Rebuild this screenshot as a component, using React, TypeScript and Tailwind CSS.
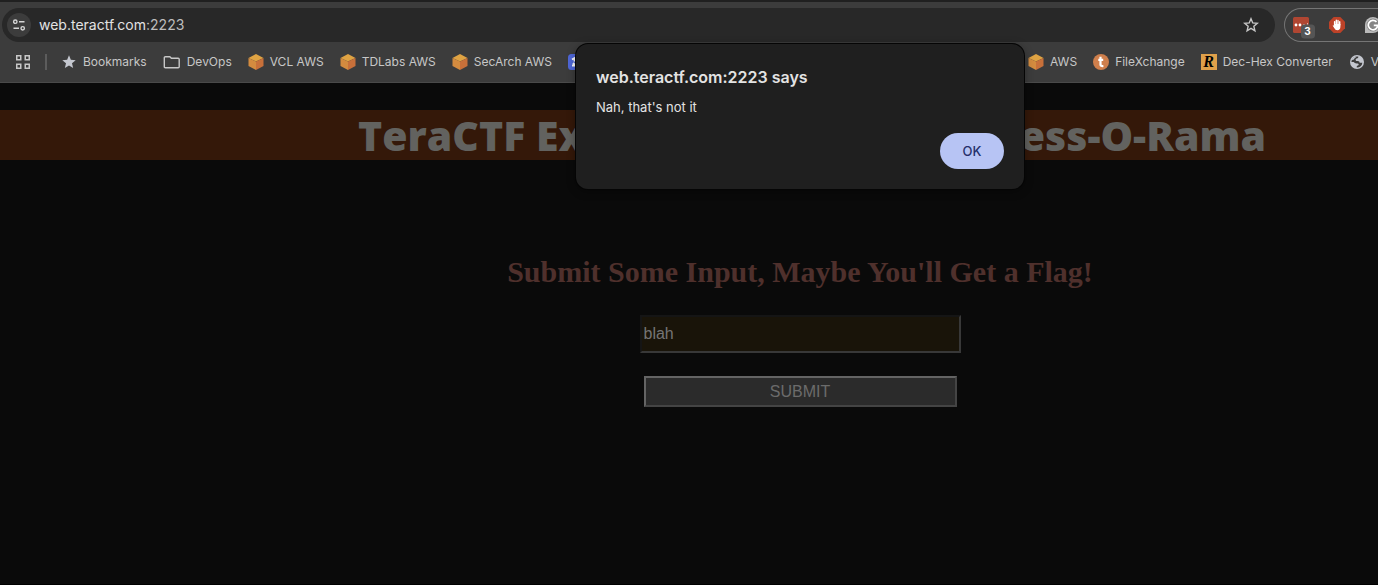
import React from "react";

function Cube() {
  return (
    <svg width="16" height="16" viewBox="0 0 16 16" className="shrink-0" aria-hidden="true">
      <path d="M8 0 15.5 4 8 7.600 .5 4Z" fill="#dfa343" />
      <path d="M.5 4 8 7.600V16L.5 12Z" fill="#d48b3f" />
      <path d="M15.500 4 8 7.600V16l7.500-4Z" fill="#c8703a" />
    </svg>
  );
}

function StarSolid() {
  return (
    <svg width="16" height="16" viewBox="0 0 16 16" className="shrink-0" aria-hidden="true">
      <path d="m8 1.300 1.850 4.500 4.850.400-3.700 3.150 1.150 4.700L8 11.500l-4.150 2.550L5 9.350 1.300 6.200l4.850-.400Z" fill="#c4c7cf" />
    </svg>
  );
}

function Folder() {
  return (
    <svg width="18" height="16" viewBox="0 0 18 16" className="shrink-0" aria-hidden="true">
      <path d="M2.300 2.700h4.500l1.600 1.600h6.800c.6 0 1 .4 1 1v7.400c0 .6-.4 1-1 1H2.300c-.6 0-1-.4-1-1v-9c0-.6.4-1 1-1Z" fill="none" stroke="#c7c7c7" strokeWidth="1.400" />
    </svg>
  );
}

function Disc() {
  return (
    <svg width="16" height="16" viewBox="0 0 16 16" className="shrink-0" aria-hidden="true">
      <circle cx="8" cy="8" r="8" fill="#cf7f4c" />
      <path d="M7.500 2.800v7.900c0 1 .8 1.500 2.900 1.300M5.300 5.900h4.900" fill="none" stroke="#fff" strokeWidth="2.200" />
    </svg>
  );
}

function Globe() {
  return (
    <svg width="16" height="16" viewBox="0 0 16 16" className="shrink-0" aria-hidden="true">
      <circle cx="8" cy="8" r="7" fill="#c4c7cf" />
      <path d="M9.300 2.600c.2 1.300-.5 1.800-1.600 1.900-.9.100-1 .6-1 1.400 0 1 .7 1.200 2 1.200 1.500 0 1.800.8 1.900 1.700h2.800a5.600 5.600 0 0 1-5.600 4.700c-.3-1.100.2-1.700 1.100-1.900.8-.2.8-.9.700-1.500-.3-.7-1.200-.7-2-.7-1.400 0-2.200-.5-2.900-1.300H2.400a5.600 5.600 0 0 1 6.900-5.500Z" fill="#3c3c3c" />
      <path d="M2.800 6.300C3.500 4.200 5 3 7.200 2.600c0 .8-.5 1-1.300 1.400-.7.500-.8 1.400-1.600 1.800-.5.200-.9.500-1.500.5Z" fill="#c4c7cf" />
    </svg>
  );
}

function RBadge() {
  return (
    <span className="flex size-4 shrink-0 items-center justify-center bg-[#dfa04a] font-['Liberation_Serif',serif] text-base leading-4 font-bold text-black italic">
      R
    </span>
  );
}

function BlueBadge() {
  return (
    <svg width="16" height="16" viewBox="0 0 16 16" className="shrink-0" aria-hidden="true">
      <rect width="16" height="16" rx="3.500" fill="#4f67d8" />
      <path d="M4 5.500 6.500 4v3.500M4 11.500h3.500L5 9" stroke="#fff" strokeWidth="1.800" fill="none" />
    </svg>
  );
}

function Bookmark({ icon, label }: { icon: React.ReactNode; label?: string }) {
  return (
    <a href="#" className="flex shrink-0 items-center gap-1.5 whitespace-nowrap">
      {icon}
      {label && <span>{label}</span>}
    </a>
  );
}

function AddressRow() {
  return (
    <div className="flex h-10 items-start gap-[9px] pt-1.5 pl-0.5">
      <div className="flex h-[34px] flex-1 items-center rounded-full bg-[#282828] pr-4 pl-[5px]">
        <button aria-label="Site information" className="mr-2 flex size-6 items-center justify-center rounded-full bg-[#3c3c3c]">
          <svg width="14" height="14" viewBox="0 0 14 14" fill="none" stroke="#d6d6d6" strokeWidth="1.400" aria-hidden="true">
            <circle cx="3.300" cy="3.700" r="1.700" />
            <path d="M7 3.700h5.500M1.500 10.300H7" />
            <circle cx="10.700" cy="10.300" r="1.700" />
          </svg>
        </button>
        <div className="flex-1 text-sm text-[#e3e3e3]">
          web.teractf.com<span className="text-[#bdbdbd]">:2223</span>
        </div>
        <button aria-label="Bookmark this tab">
          <svg width="16" height="16" viewBox="0 0 16 16" fill="none" stroke="#c7c7c7" strokeWidth="1.400" aria-hidden="true">
            <path d="m8 1.700 1.750 4.200 4.550.400-3.450 3 1.050 4.450L8 11.400l-3.900 2.350L5.150 9.300 1.700 6.300l4.550-.400Z" />
          </svg>
        </button>
      </div>
      <div className="flex h-[34px] w-[94px] items-center gap-5 overflow-hidden rounded-l-full border border-r-0 border-[#757575] pl-2">
        <button aria-label="Password manager" className="shrink-0">
          <svg width="22" height="22" viewBox="0 0 22 22" className="-mr-[6px] mt-1.5" aria-hidden="true">
            <rect x="0" y="0" width="16" height="16" rx="1.500" fill="#b04632" />
            <circle cx="3" cy="8" r="1.400" fill="#fff" />
            <circle cx="7" cy="8" r="1.400" fill="#fff" />
            <circle cx="11" cy="8" r="1" fill="#e0b0a6" />
            <path d="M14.500 6v3" stroke="#e0b0a6" />
            <rect x="8" y="7.500" width="14" height="14" rx="3.500" fill="#555" />
            <text x="14.500" y="18" textAnchor="middle" fill="#fff" className="font-['Inter',sans-serif] text-[10px] font-bold">3</text>
          </svg>
        </button>
        <button aria-label="Content blocker" className="shrink-0">
          <svg width="16" height="16" viewBox="0 0 16 16" aria-hidden="true">
            <path d="M4.700 0h6.600L16 4.700v6.600L11.300 16H4.700L0 11.300V4.700Z" fill="#bd4228" />
            <path d="M5.600 8V4.600M7.300 7.500V3.200M9 7.500V3.500M10.700 8V4.800" stroke="#fff" strokeWidth="1.400" strokeLinecap="round" />
            <path d="M4.900 7h6.500v2.800c0 2-1.200 3.500-3 3.500-1.600 0-2.400-.8-3-2L3.700 8.700c.5-.6 1.100-.4 1.500.2Z" fill="#fff" />
          </svg>
        </button>
        <button aria-label="Writing assistant" className="shrink-0">
          <svg width="16" height="16" viewBox="0 0 16 16" aria-hidden="true">
            <path d="M8 0a8 8 0 1 1 0 16H0V8a8 8 0 0 1 8-8Z" fill="#b9b9b9" />
            <circle cx="8" cy="8" r="6.400" fill="#858585" />
            <path d="M11.500 4.900A4.700 4.700 0 1 0 12.700 8.400H8.800" fill="none" stroke="#fff" strokeWidth="1.700" />
          </svg>
        </button>
      </div>
    </div>
  );
}

function BookmarksBar() {
  return (
    <nav className="flex h-[41px] items-center overflow-hidden border-b border-[#4a4a4a] text-xs text-[#c7c7c7]">
      <div className="flex w-[1028px] shrink-0 items-center gap-4 pl-[15px]">
        <div className="-mr-0.5 flex items-center gap-3.5">
          <button aria-label="Tab groups">
            <svg width="16" height="16" viewBox="0 0 16 16" fill="none" stroke="#c7c7c7" strokeWidth="1.500" aria-hidden="true">
              <path d="M1.750 1.750h4v4h-4ZM10.250 1.750h4v4h-4ZM1.750 10.250h4v4h-4ZM10.250 10.250h4v4h-4Z" />
            </svg>
          </button>
          <span className="h-4 w-0.5 shrink-0 bg-[#5c5c5c]" />
        </div>
        <Bookmark icon={<StarSolid />} label="Bookmarks" />
        <Bookmark icon={<Folder />} label="DevOps" />
        <Bookmark icon={<Cube />} label="VCL AWS" />
        <Bookmark icon={<Cube />} label="TDLabs AWS" />
        <Bookmark icon={<Cube />} label="SecArch AWS" />
        <Bookmark icon={<BlueBadge />} />
      </div>
      <div className="flex items-center gap-4">
        <Bookmark icon={<Cube />} label="AWS" />
        <Bookmark icon={<Disc />} label="FileXchange" />
        <Bookmark icon={<RBadge />} label="Dec-Hex Converter" />
        <Bookmark icon={<Globe />} label="V" />
      </div>
    </nav>
  );
}

function AlertDialog() {
  return (
    <div
      role="alertdialog"
      aria-labelledby="alert-title"
      aria-describedby="alert-text"
      className="absolute top-11 left-1/2 flex w-[448px] -translate-x-1/2 flex-col rounded-xl bg-[#1f1f1f] p-5 text-[#e3e3e3] shadow-[0_0_0_1px_#050505,0_2px_10px_rgba(0,0,0,0.4)]"
    >
      <h2 id="alert-title" className="text-base leading-[26px] font-semibold">web.teractf.com:2223 says</h2>
      <p id="alert-text" className="mt-1 text-[13px] leading-[26px]">Nah, that's not it</p>
      <button className="mt-[13px] h-9 w-16 self-end rounded-full bg-[#b7c4f4] pt-0.5 text-[13px] font-medium text-[#25306b]">OK</button>
    </div>
  );
}

export default function App() {
  return (
    <div className="relative flex min-h-screen flex-col overflow-hidden border-b border-black bg-[#0a0a0a] font-['Inter',sans-serif]">
      <header className="border-t-2 border-[#202020] bg-[#3c3c3c]">
        <AddressRow />
        <BookmarksBar />
      </header>
      <main className="flex min-w-[1600px] flex-col items-center pt-[27px]">
        <h1 className="flex h-[50px] w-full items-center justify-center bg-[#341809] pl-6 font-['Open_Sans',sans-serif] text-[41px] leading-[50px] font-extrabold text-[#62625f]">
          <span className="flex w-[908px] justify-between">
            <span>TeraCTF Ex</span>
            <span>ess-O-Rama</span>
          </span>
        </h1>
        <h2 className="mt-[94px] font-['Liberation_Serif',serif] text-[30px] leading-9 font-bold text-[#4f302c]">
          Submit Some Input, Maybe You'll Get a Flag!
        </h2>
        <form className="mt-[25px] flex flex-col items-center font-['Liberation_Sans',sans-serif] text-base" onSubmit={(e) => e.preventDefault()}>
          <input
            aria-label="Input"
            defaultValue="blah"
            className="h-[38px] w-[321px] border-2 border-t-[#151515] border-r-[#383838] border-b-[#383838] border-l-[#151515] bg-[#191409] px-0.5 text-[#757575] outline-none"
          />
          <button className="mt-[23px] h-[31px] w-[313px] border-2 border-t-[#646464] border-r-[#444] border-b-[#444] border-l-[#646464] bg-[#2b2b2b] text-[#6b6b6b]">
            SUBMIT
          </button>
        </form>
      </main>
      <div className="absolute top-0 left-0 w-[1600px]">
        <AlertDialog />
      </div>
    </div>
  );
}
